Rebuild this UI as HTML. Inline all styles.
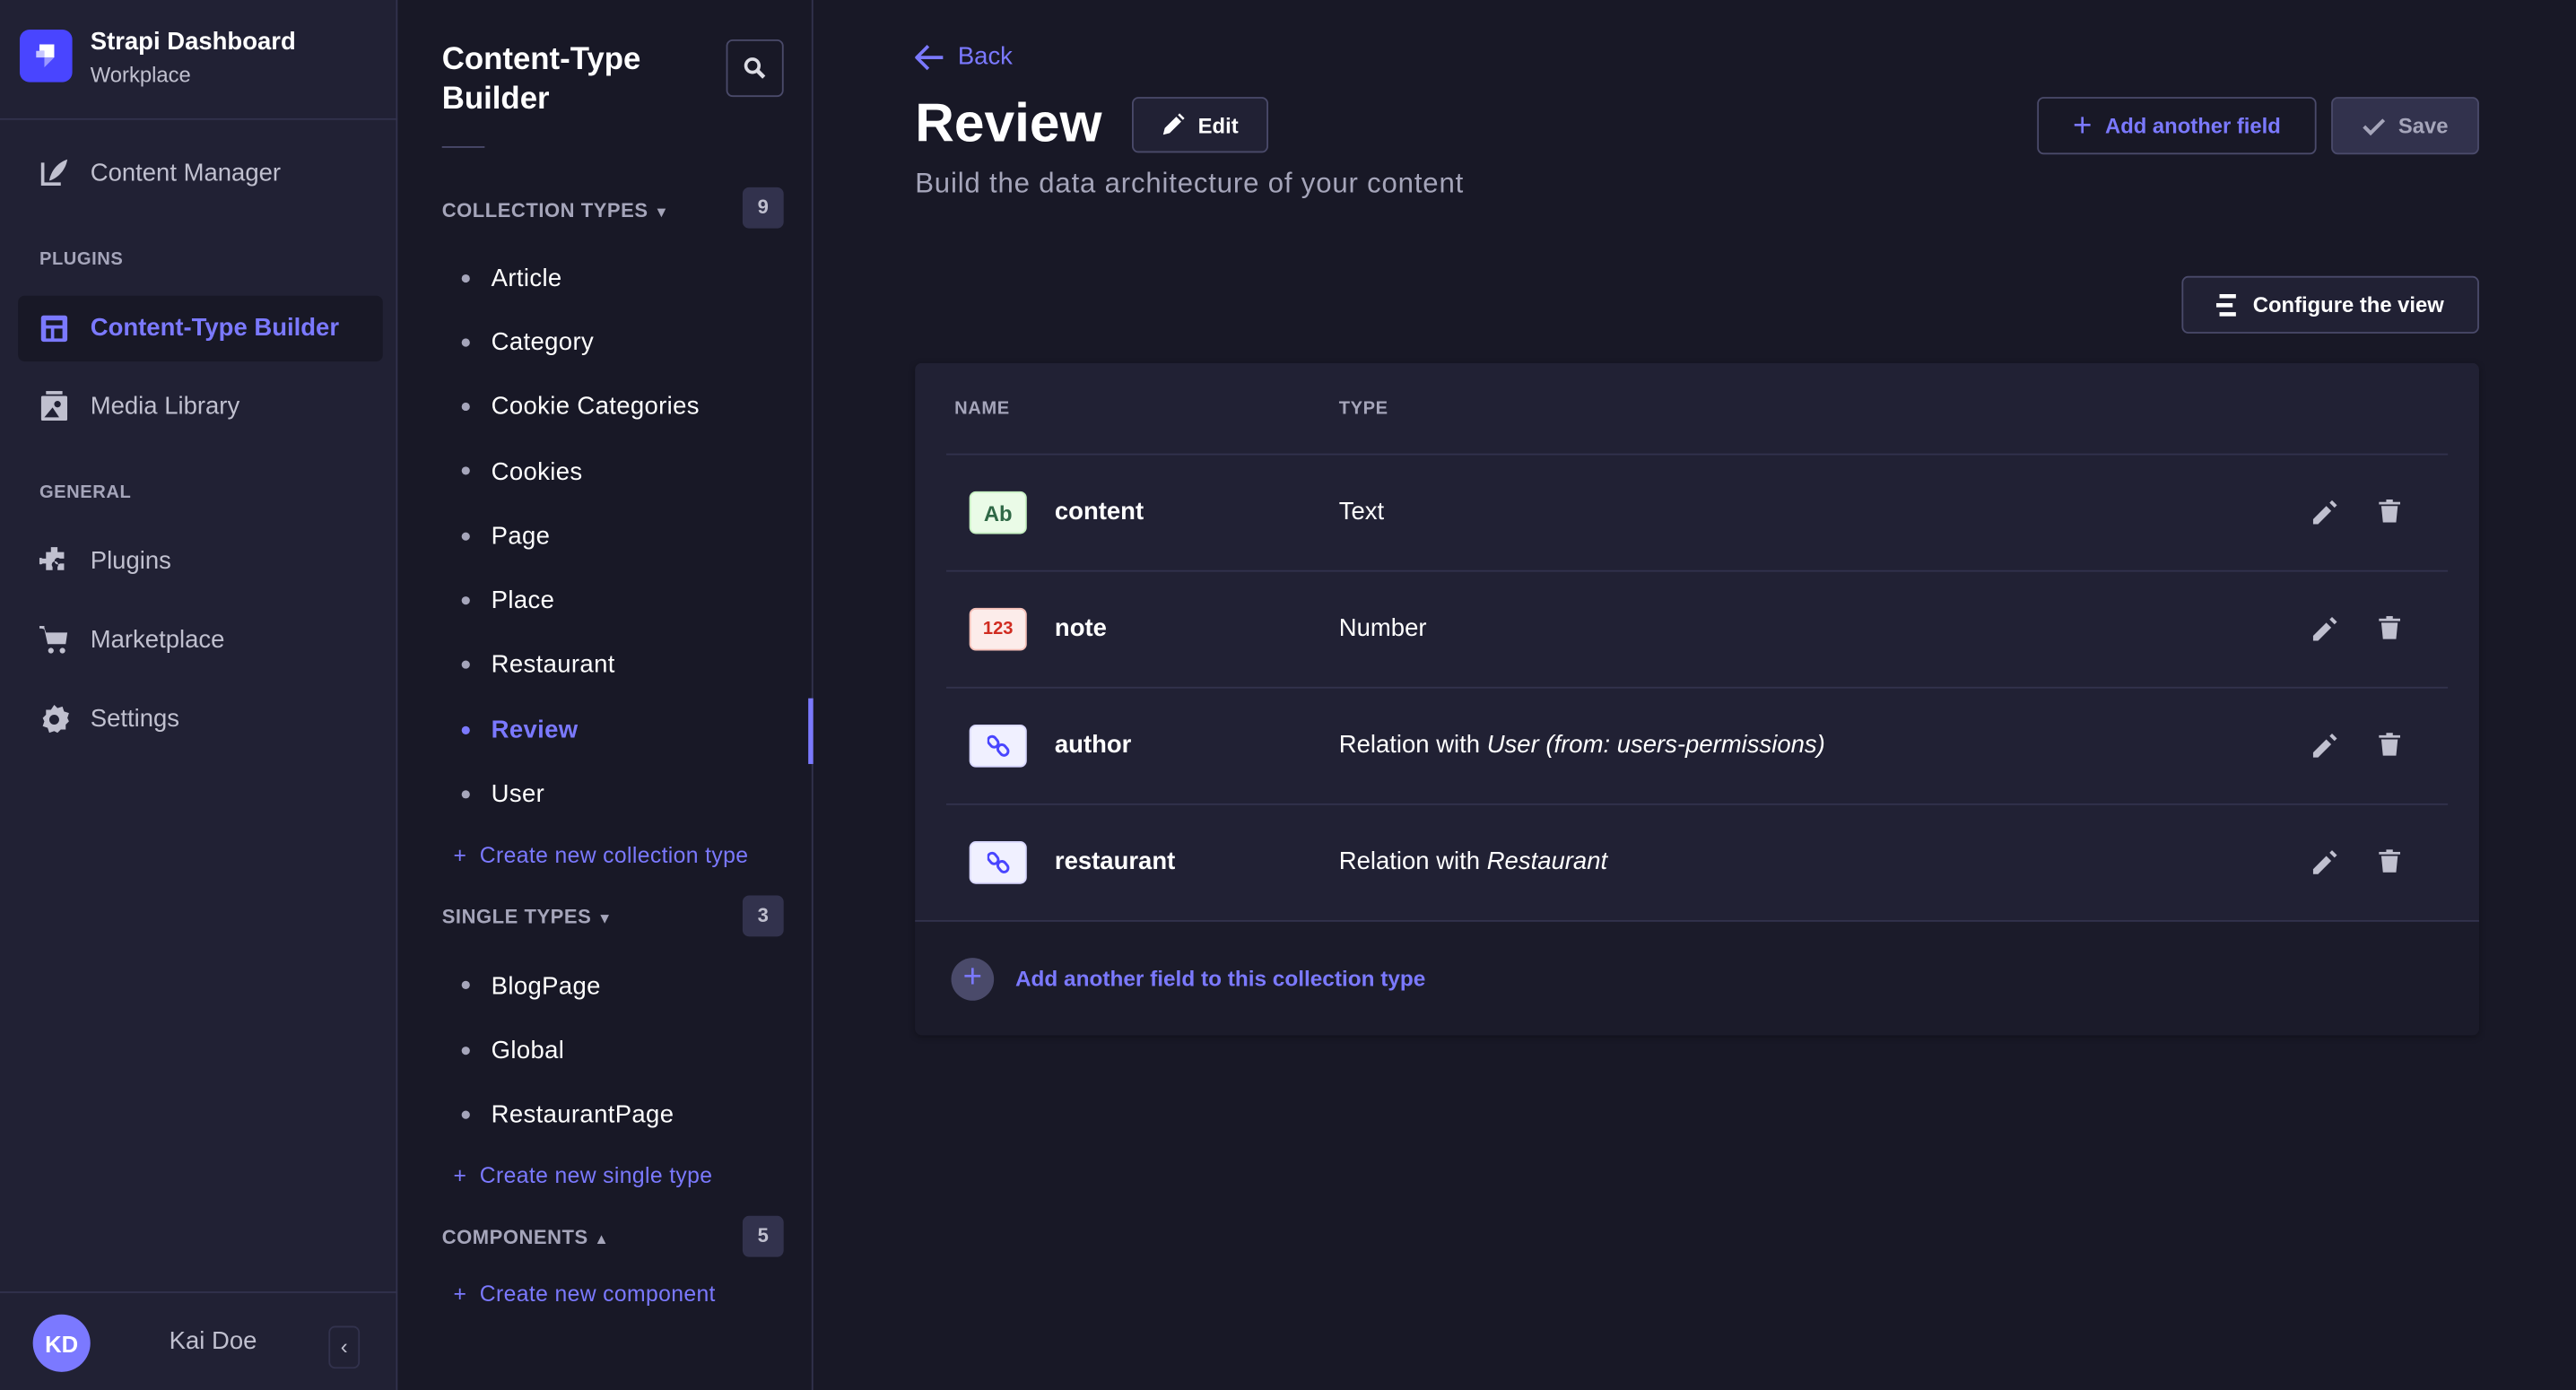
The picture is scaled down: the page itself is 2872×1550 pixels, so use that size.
<!DOCTYPE html>
<html><head><meta charset="utf-8">
<style>
*{margin:0;padding:0;box-sizing:border-box}
html,body{width:2872px;height:1550px;overflow:hidden;background:#181826}
#w{position:absolute;left:0;top:0;width:1568px;height:846px;transform:scale(1.83163,1.83215);transform-origin:0 0;font-family:"Liberation Sans",sans-serif;background:#181826;color:#fff}
.a{position:absolute;white-space:nowrap}
.nav{font-size:15px;color:#c0c0cf}
.sec{font-size:11px;font-weight:bold;color:#a5a5ba;letter-spacing:.3px}
.li{font-size:15px;color:#fff;letter-spacing:.2px}
.dot{position:absolute;width:5px;height:5px;border-radius:50%;background:#a5a5ba}
.btn{position:absolute;border:1px solid #4a4a6a;border-radius:4px;font-size:13px;font-weight:bold;display:flex;align-items:center;justify-content:center;gap:8px}
.hr{position:absolute;left:576px;width:914px;height:1px;background:#32324d}
.ic{position:absolute;left:590px;width:35px;height:26px;border-radius:4px;display:flex;align-items:center;justify-content:center;font-size:12px;font-weight:bold}
.nm{font-size:15px;font-weight:bold;left:642px}
.tp{font-size:15px;left:815px}
.cr{font-size:13.5px;color:#7b79ff;letter-spacing:.2px}
</style></head><body><div id="w">
<div class="a" style="left:0;top:0;width:242px;height:846px;background:#212134;border-right:1px solid #32324d"></div>
<div class="a" style="left:0;top:72px;width:242px;height:1px;background:#32324d"></div>
<div class="a" style="left:0;top:786px;width:242px;height:1px;background:#32324d"></div>
<div class="a" style="left:12px;top:18px;width:32px;height:32px;border-radius:6px;background:#4945ff"></div>
<svg class="a" style="left:18px;top:25px" width="20" height="18" viewBox="0 0 20 18"><path d="M6 2h9v8h-6V6H6z" fill="#fff"/><path d="M4 6h5v4H4z" fill="#c7c6ff"/><path d="M9 10h6l-6 6z" fill="#9b98ff"/></svg>
<div class="a" style="left:55px;top:17px;font-size:15px;font-weight:bold">Strapi Dashboard</div>
<div class="a" style="left:55px;top:38px;font-size:13px;color:#c0c0cf">Workplace</div>
<svg class="a" style="left:24px;top:96px" width="18" height="18" viewBox="0 0 18 18"><path d="M1 3v14h12v-2H3V3z" fill="#c0c0cf"/><path d="M6 14c1-6 5-11 11-13-1 6-5 11-11 13z" fill="#c0c0cf"/></svg>
<div class="a nav" style="left:55px;top:97px">Content Manager</div>
<div class="a sec" style="left:24px;top:152px">PLUGINS</div>
<div class="a" style="left:11px;top:180px;width:222px;height:40px;border-radius:4px;background:#181826"></div>
<svg class="a" style="left:24px;top:191px" width="18" height="18" viewBox="0 0 18 18"><rect x="1" y="1" width="16" height="16" rx="1.5" fill="#7b79ff"/><rect x="4" y="4" width="10" height="3" fill="#181826"/><rect x="4" y="9" width="3" height="6" fill="#181826"/><rect x="9" y="9" width="5" height="6" fill="#181826"/></svg>
<div class="a" style="left:55px;top:191px;font-size:15px;font-weight:bold;color:#7b79ff">Content-Type Builder</div>
<svg class="a" style="left:25px;top:238px" width="16" height="18" viewBox="0 0 16 18"><rect x="3" y="0" width="10" height="2" fill="#c0c0cf"/><rect x="0" y="3" width="16" height="15" rx="1" fill="#c0c0cf"/><circle cx="10" cy="8" r="2" fill="#212134"/><path d="M2 16l5-6 4 6z" fill="#212134"/></svg>
<div class="a nav" style="left:55px;top:239px">Media Library</div>
<div class="a sec" style="left:24px;top:294px">GENERAL</div>
<svg class="a" style="left:24px;top:332px" width="18" height="18" viewBox="0 0 18 18"><path d="M7 1h4v3h4v4h-2.5a2 2 0 100 3H15v4h-4v-2a2 2 0 10-3 0v2H4v-4H2a2 2 0 110-3h2V4h3z" fill="#c0c0cf"/></svg>
<div class="a nav" style="left:55px;top:333px">Plugins</div>
<svg class="a" style="left:24px;top:381px" width="18" height="17" viewBox="0 0 18 17"><path d="M0 1h3l1 3h13l-1 7H5L3 2" fill="#c0c0cf"/><rect x="0" y="0" width="3" height="1.5" fill="#c0c0cf"/><circle cx="7" cy="15" r="1.7" fill="#c0c0cf"/><circle cx="14" cy="15" r="1.7" fill="#c0c0cf"/></svg>
<div class="a nav" style="left:55px;top:381px">Marketplace</div>
<svg class="a" style="left:24px;top:429px" width="18" height="18" viewBox="0 0 18 18"><path d="M9 0l2 2 3-1 1 3 3 1-1 3 1 2-2 2 0 3-3 0-2 2-2-1-3 1-1-3-3-1 1-3-1-2 2-2 0-3 3 0z" fill="#c0c0cf"/><circle cx="9" cy="9" r="3" fill="#212134"/></svg>
<div class="a nav" style="left:55px;top:429px">Settings</div>
<div class="a" style="left:20px;top:800px;width:35px;height:35px;border-radius:50%;background:#7b79ff;color:#fff;font-size:14px;font-weight:bold;display:flex;align-items:center;justify-content:center">KD</div>
<div class="a nav" style="left:103px;top:808px">Kai Doe</div>
<div class="a" style="left:200px;top:807px;width:19px;height:26px;border:1px solid #32324d;border-radius:4px;color:#c0c0cf;font-size:13px;text-align:center;line-height:24px">&#8249;</div>
<div class="a" style="left:494px;top:0;width:1px;height:846px;background:#32324d"></div>
<div class="a" style="left:492px;top:425px;width:3px;height:40px;background:#7b79ff"></div>
<div class="a" style="left:269px;top:25px;font-size:19px;font-weight:bold;line-height:24px;white-space:normal;width:160px">Content-Type Builder</div>
<div class="a" style="left:442px;top:24px;width:35px;height:35px;border:1px solid #4a4a6a;border-radius:4px"></div>
<svg class="a" style="left:452px;top:34px" width="15" height="15" viewBox="0 0 15 15"><circle cx="6" cy="6" r="4" fill="none" stroke="#dcdce4" stroke-width="2"/><path d="M9 9l4 4" stroke="#dcdce4" stroke-width="2.5"/></svg>
<div class="a" style="left:269px;top:89px;width:26px;height:1px;background:#4a4a6a"></div>
<div class="a sec" style="left:269px;top:121px;font-size:12px">COLLECTION TYPES <span style="font-size:9px">&#9660;</span></div>
<div class="a" style="left:452px;top:114px;width:25px;height:25px;border-radius:4px;background:#32324d;color:#c0c0cf;font-size:12px;font-weight:bold;text-align:center;line-height:25px">9</div>
<div class="dot" style="left:281px;top:167px"></div><div class="a li" style="left:299px;top:161px">Article</div>
<div class="dot" style="left:281px;top:206px"></div><div class="a li" style="left:299px;top:200px">Category</div>
<div class="dot" style="left:281px;top:245px"></div><div class="a li" style="left:299px;top:239px">Cookie Categories</div>
<div class="dot" style="left:281px;top:284px"></div><div class="a li" style="left:299px;top:279px">Cookies</div>
<div class="dot" style="left:281px;top:324px"></div><div class="a li" style="left:299px;top:318px">Page</div>
<div class="dot" style="left:281px;top:363px"></div><div class="a li" style="left:299px;top:357px">Place</div>
<div class="dot" style="left:281px;top:402px"></div><div class="a li" style="left:299px;top:396px">Restaurant</div>
<div class="dot" style="left:281px;top:442px;background:#7b79ff"></div><div class="a li" style="left:299px;top:436px;color:#7b79ff;font-weight:bold">Review</div>
<div class="dot" style="left:281px;top:481px"></div><div class="a li" style="left:299px;top:475px">User</div>
<div class="a cr" style="left:276px;top:513px">+&nbsp; Create new collection type</div>
<div class="a sec" style="left:269px;top:551px;font-size:12px">SINGLE TYPES <span style="font-size:9px">&#9660;</span></div>
<div class="a" style="left:452px;top:545px;width:25px;height:25px;border-radius:4px;background:#32324d;color:#c0c0cf;font-size:12px;font-weight:bold;text-align:center;line-height:25px">3</div>
<div class="dot" style="left:281px;top:597px"></div><div class="a li" style="left:299px;top:592px">BlogPage</div>
<div class="dot" style="left:281px;top:637px"></div><div class="a li" style="left:299px;top:631px">Global</div>
<div class="dot" style="left:281px;top:676px"></div><div class="a li" style="left:299px;top:670px">RestaurantPage</div>
<div class="a cr" style="left:276px;top:708px">+&nbsp; Create new single type</div>
<div class="a sec" style="left:269px;top:746px;font-size:12px">COMPONENTS <span style="font-size:9px">&#9650;</span></div>
<div class="a" style="left:452px;top:740px;width:25px;height:25px;border-radius:4px;background:#32324d;color:#c0c0cf;font-size:12px;font-weight:bold;text-align:center;line-height:25px">5</div>
<div class="a cr" style="left:276px;top:780px">+&nbsp; Create new component</div>
<svg class="a" style="left:557px;top:27px" width="18" height="16" viewBox="0 0 18 16"><path d="M17 8H2M8 1L1 8l7 7" fill="none" stroke="#7b79ff" stroke-width="2"/></svg>
<div class="a" style="left:583px;top:26px;font-size:15px;color:#7b79ff">Back</div>
<div class="a" style="left:557px;top:56px;font-size:33px;font-weight:bold">Review</div>
<div class="btn" style="left:689px;top:59px;width:83px;height:34px;background:#212134;color:#fff"><svg width="14" height="14" viewBox="0 0 14 14"><path d="M1 13l1-4 7-7 3 3-7 7z" fill="#fff"/><path d="M10 1l1-1 3 3-1 1z" fill="#fff"/></svg>Edit</div>
<div class="a" style="left:557px;top:102px;font-size:17px;color:#a5a5ba;letter-spacing:.45px">Build the data architecture of your content</div>
<div class="btn" style="left:1240px;top:59px;width:170px;height:35px;background:#181826;color:#7b79ff;border-color:#4a4a6a"><span style="font-size:20px;font-weight:normal;line-height:1">+</span>Add another field</div>
<div class="btn" style="left:1419px;top:59px;width:90px;height:35px;background:#32324d;color:#a5a5ba"><svg width="14" height="12" viewBox="0 0 14 12"><path d="M1 6l4 4 8-8" fill="none" stroke="#a5a5ba" stroke-width="2.2"/></svg>Save</div>
<div class="btn" style="left:1328px;top:168px;width:181px;height:35px;background:#212134;color:#fff"><svg width="14" height="14" viewBox="0 0 14 14"><rect x="2" y="0" width="10" height="2.5" fill="#fff"/><rect x="0" y="5.5" width="10" height="2.5" fill="#fff"/><rect x="2" y="11" width="10" height="2.5" fill="#fff"/></svg>Configure the view</div>
<div class="a" style="left:557px;top:221px;width:952px;height:409px;background:#212134;border-radius:4px;box-shadow:0 1px 4px rgba(0,0,0,.3)"></div>
<div class="a" style="left:557px;top:561px;width:952px;height:69px;background:#1b1b2a;border-radius:0 0 4px 4px"></div>
<div class="a sec" style="left:581px;top:243px">NAME</div>
<div class="a sec" style="left:815px;top:243px">TYPE</div>
<div class="hr" style="top:276px"></div>
<div class="hr" style="top:347px"></div>
<div class="hr" style="top:418px"></div>
<div class="hr" style="top:489px"></div>
<div class="a" style="left:557px;top:560px;width:952px;height:1px;background:#32324d"></div>
<div class="ic" style="top:299px;background:#eafbe7;border:1px solid #c6f0c2;color:#2f6846;font-size:13px">Ab</div>
<div class="a nm" style="top:303px">content</div><div class="a tp" style="top:303px">Text</div>
<div class="ic" style="top:370px;background:#fcecea;border:1px solid #f5c0b8;color:#d02b20;font-size:11px">123</div>
<div class="a nm" style="top:374px">note</div><div class="a tp" style="top:374px">Number</div>
<div class="ic" style="top:441px;background:#f0f0ff;border:1px solid #d9d8ff"><svg width="14" height="14" viewBox="0 0 14 14"><rect x="1" y="1" width="5" height="7" rx="2.5" transform="rotate(-40 3.5 4.5)" fill="none" stroke="#4945ff" stroke-width="1.6"/><rect x="7" y="6" width="5" height="7" rx="2.5" transform="rotate(-40 9.5 9.5)" fill="none" stroke="#4945ff" stroke-width="1.6"/></svg></div>
<div class="a nm" style="top:445px">author</div><div class="a tp" style="top:445px">Relation with <i>User (from: users-permissions)</i></div>
<div class="ic" style="top:512px;background:#f0f0ff;border:1px solid #d9d8ff"><svg width="14" height="14" viewBox="0 0 14 14"><rect x="1" y="1" width="5" height="7" rx="2.5" transform="rotate(-40 3.5 4.5)" fill="none" stroke="#4945ff" stroke-width="1.6"/><rect x="7" y="6" width="5" height="7" rx="2.5" transform="rotate(-40 9.5 9.5)" fill="none" stroke="#4945ff" stroke-width="1.6"/></svg></div>
<div class="a nm" style="top:516px">restaurant</div><div class="a tp" style="top:516px">Relation with <i>Restaurant</i></div>
<svg class="a" style="left:1407px;top:304px" width="16" height="16" viewBox="0 0 16 16"><path d="M1 15v-3l8-8 3 3-8 8z" fill="#c0c0cf"/><path d="M11 2l1.5-1.5 3 3L14 5z" fill="#c0c0cf"/></svg>
<svg class="a" style="left:1448px;top:304px" width="13" height="14" viewBox="0 0 13 14"><rect x="0" y="1.5" width="13" height="1.5" fill="#c0c0cf"/><rect x="4.5" y="0" width="4" height="2" fill="#c0c0cf"/><path d="M1.5 4h10l-1 10h-8z" fill="#c0c0cf"/></svg>
<svg class="a" style="left:1407px;top:375px" width="16" height="16" viewBox="0 0 16 16"><path d="M1 15v-3l8-8 3 3-8 8z" fill="#c0c0cf"/><path d="M11 2l1.5-1.5 3 3L14 5z" fill="#c0c0cf"/></svg>
<svg class="a" style="left:1448px;top:375px" width="13" height="14" viewBox="0 0 13 14"><rect x="0" y="1.5" width="13" height="1.5" fill="#c0c0cf"/><rect x="4.5" y="0" width="4" height="2" fill="#c0c0cf"/><path d="M1.5 4h10l-1 10h-8z" fill="#c0c0cf"/></svg>
<svg class="a" style="left:1407px;top:446px" width="16" height="16" viewBox="0 0 16 16"><path d="M1 15v-3l8-8 3 3-8 8z" fill="#c0c0cf"/><path d="M11 2l1.5-1.5 3 3L14 5z" fill="#c0c0cf"/></svg>
<svg class="a" style="left:1448px;top:446px" width="13" height="14" viewBox="0 0 13 14"><rect x="0" y="1.5" width="13" height="1.5" fill="#c0c0cf"/><rect x="4.5" y="0" width="4" height="2" fill="#c0c0cf"/><path d="M1.5 4h10l-1 10h-8z" fill="#c0c0cf"/></svg>
<svg class="a" style="left:1407px;top:517px" width="16" height="16" viewBox="0 0 16 16"><path d="M1 15v-3l8-8 3 3-8 8z" fill="#c0c0cf"/><path d="M11 2l1.5-1.5 3 3L14 5z" fill="#c0c0cf"/></svg>
<svg class="a" style="left:1448px;top:517px" width="13" height="14" viewBox="0 0 13 14"><rect x="0" y="1.5" width="13" height="1.5" fill="#c0c0cf"/><rect x="4.5" y="0" width="4" height="2" fill="#c0c0cf"/><path d="M1.5 4h10l-1 10h-8z" fill="#c0c0cf"/></svg>
<div class="a" style="left:579px;top:583px;width:26px;height:26px;border-radius:50%;background:#4a4a6a;color:#7b79ff;font-size:20px;text-align:center;line-height:25px">+</div>
<div class="a" style="left:618px;top:588px;font-size:13.3px;font-weight:bold;color:#7b79ff">Add another field to this collection type</div>
</div></body></html>
